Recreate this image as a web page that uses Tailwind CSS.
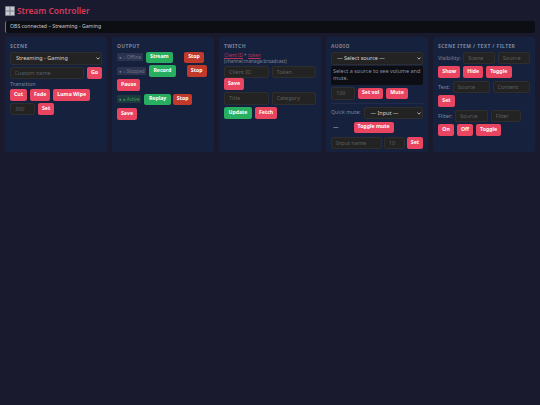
<!DOCTYPE html>
<html>
  <head>
    <meta charset="UTF-8" />
    <title>Stream Controller</title>
    <script src="https://cdn.jsdelivr.net/npm/@tailwindcss/browser@4"></script>
  </head>
  <body class="bg-[#1a1a2e] h-[405px] w-[540px] overflow-hidden font-['Noto_Sans',sans-serif] text-[7px] text-[#e0e0e0]">
    <header class="flex items-center gap-[2px] h-[21px] pl-[5px] pt-[1px]">
      <svg width="10" height="10" viewBox="0 0 10 10" class="shrink-0">
        <rect width="10" height="10" rx="1" fill="#7c7e8c" />
        <rect x="1" y="1" width="3.5" height="3.5" fill="#c9cad0" />
        <rect x="5.5" y="1" width="3.5" height="3.5" fill="#c9cad0" />
        <rect x="1" y="5.5" width="3.5" height="3.5" fill="#c9cad0" />
        <rect x="5.5" y="5.5" width="3.5" height="3.5" fill="#c9cad0" />
      </svg>
      <h1 class="text-[8.4px] font-semibold text-[#d63a5a] leading-none">Stream Controller</h1>
    </header>

    <div class="mx-[5px] h-[12px] flex items-center pl-[4px] bg-[#0d0d14] border-l border-l-[#2f9e6a] rounded-[2px] text-[5.2px] text-[#c9cbd1]">
      OBS connected – Streaming - Gaming
    </div>

    <main class="grid grid-cols-5 gap-[5px] mx-[5px] mt-[4px]">
      <!-- Scene -->
      <section class="h-[115px] bg-[#16213e] rounded-[3px] p-[5px]">
        <h2 class="text-[5px] font-bold tracking-[0.4px] text-[#7d8699] leading-[7px] mb-[2px] mt-[0.5px]">SCENE</h2>
        <div class="relative">
          <select class="appearance-none block w-full h-[13px] bg-[#232323] rounded-[2px] text-[5.5px] pl-[5px] text-[#d5d5d5] border border-[#2e2e2e]">
            <option>Streaming - Gaming</option>
          </select>
          <svg width="4" height="3" viewBox="0 0 4 3" class="absolute right-[2px] top-[5px]"><path d="M.5.5 2 2.2 3.5.5" fill="none" stroke="#d5d5d5" stroke-width=".8" /></svg>
        </div>
        <div class="flex items-center gap-[3px] mt-[2px]">
          <input placeholder="Custom name" class="min-w-0 flex-1 h-[12.5px] bg-[#232323] border border-[#2e2e2e] rounded-[2px] px-[3.5px] text-[5.5px] placeholder-[#5f5f5f]" />
          <button class="h-[11.5px] px-[4px] bg-[#e94560] rounded-[2px] text-[5.2px] font-bold text-white">Go</button>
        </div>
        <p class="text-[5.5px] text-[#7d8699] leading-[7px] mt-[2px]">Transition</p>
        <div class="flex gap-[3px] mt-[1px]">
          <button class="h-[11.5px] px-[4px] bg-[#e94560] rounded-[2px] text-[5.2px] font-bold text-white">Cut</button>
          <button class="h-[11.5px] px-[4px] bg-[#e94560] rounded-[2px] text-[5.2px] font-bold text-white">Fade</button>
          <button class="h-[11.5px] px-[4px] bg-[#e94560] rounded-[2px] text-[5.2px] font-bold text-white">Luma Wipe</button>
        </div>
        <div class="flex gap-[3px] mt-[2px] items-center">
          <input placeholder="300" class="w-[25px] h-[12.5px] bg-[#232323] border border-[#2e2e2e] rounded-[2px] px-[4px] text-[5.5px] placeholder-[#5f5f5f]" />
          <button class="h-[11.5px] px-[4px] bg-[#e94560] rounded-[2px] text-[5.2px] font-bold text-white">Set</button>
        </div>
      </section>

      <!-- Output -->
      <section class="h-[115px] bg-[#16213e] rounded-[3px] p-[5px]">
        <h2 class="text-[5px] font-bold tracking-[0.4px] text-[#7d8699] leading-[7px] mb-[2px] mt-[0.5px]">OUTPUT</h2>
        <div class="flex items-center gap-[2.5px] h-[11.5px]">
          <span class="h-[8px] px-[2px] bg-[#2b3350] rounded-[1px] text-[4.5px] leading-[8px] text-[#6f7688] whitespace-nowrap">● ○ Offline</span>
          <button class="h-[11.5px] px-[4.5px] bg-[#27ae60] rounded-[2px] text-[5.2px] font-bold text-white">Stream</button>
          <button class="h-[11.5px] px-[4px] bg-[#c0392b] rounded-[2px] text-[5.2px] font-bold text-white ml-[8.5px]">Stop</button>
        </div>
        <div class="flex items-center gap-[2.5px] h-[11.5px] mt-[2px]">
          <span class="h-[8px] px-[2px] bg-[#2b3350] rounded-[1px] text-[4.5px] leading-[8px] text-[#6f7688] whitespace-nowrap">● ○ Stopped</span>
          <button class="h-[11.5px] px-[4.5px] bg-[#27ae60] rounded-[2px] text-[5.2px] font-bold text-white">Record</button>
          <button class="h-[11.5px] px-[4px] bg-[#c0392b] rounded-[2px] text-[5.2px] font-bold text-white ml-[8.5px]">Stop</button>
        </div>
        <button class="block h-[12px] px-[4px] mt-[2.5px] bg-[#e94560] rounded-[2px] text-[5.2px] font-bold text-white">Pause</button>
        <div class="flex items-center gap-[2px] h-[11.5px] mt-[2.5px]">
          <span class="h-[8px] px-[2px] bg-[#1c3a3c] rounded-[1px] text-[4.5px] leading-[8px] text-[#3f9a68] whitespace-nowrap">● ● Active</span>
          <button class="h-[11.5px] px-[4.5px] bg-[#27ae60] rounded-[2px] text-[5.2px] font-bold text-white ml-[1px]">Replay</button>
          <button class="h-[11.5px] px-[4px] bg-[#c0392b] rounded-[2px] text-[5.2px] font-bold text-white">Stop</button>
        </div>
        <button class="block h-[12px] px-[4px] mt-[2.5px] bg-[#e94560] rounded-[2px] text-[5.2px] font-bold text-white">Save</button>
      </section>

      <!-- Twitch -->
      <section class="h-[115px] bg-[#16213e] rounded-[3px] p-[5px]">
        <h2 class="text-[5px] font-bold tracking-[0.4px] text-[#7d8699] leading-[7px] mb-[2px] mt-[0.5px]">TWITCH</h2>
        <p class="text-[4.7px] leading-[6px] text-[#7d8699]"><a class="underline text-[#b8355a]">Client ID</a> + <a class="underline text-[#b8355a]">token</a><br />(channel:manage:broadcast)</p>
        <div class="flex gap-[3px] mt-[2px]">
          <input placeholder="Client ID" class="min-w-0 flex-1 h-[12.5px] bg-[#232323] border border-[#2e2e2e] rounded-[2px] px-[4px] text-[5.5px] placeholder-[#5f5f5f]" />
          <input placeholder="Token" class="min-w-0 flex-1 h-[12.5px] bg-[#232323] border border-[#2e2e2e] rounded-[2px] px-[4px] text-[5.5px] placeholder-[#5f5f5f]" />
        </div>
        <button class="block h-[12px] px-[4px] bg-[#e94560] rounded-[2px] text-[5.2px] font-bold text-white">Save</button>
        <div class="flex gap-[3px] mt-[2px]">
          <input placeholder="Title" class="min-w-0 flex-1 h-[12.5px] bg-[#232323] border border-[#2e2e2e] rounded-[2px] px-[4px] text-[5.5px] placeholder-[#5f5f5f]" />
          <input placeholder="Category" class="min-w-0 flex-1 h-[12.5px] bg-[#232323] border border-[#2e2e2e] rounded-[2px] px-[4px] text-[5.5px] placeholder-[#5f5f5f]" />
        </div>
        <div class="flex gap-[3px] mt-[2.5px]">
          <button class="h-[11.5px] px-[4.5px] bg-[#27ae60] rounded-[2px] text-[5.2px] font-bold text-white">Update</button>
          <button class="h-[11.5px] px-[4px] bg-[#e94560] rounded-[2px] text-[5.2px] font-bold text-white">Fetch</button>
        </div>
      </section>

      <!-- Audio -->
      <section class="h-[115px] bg-[#16213e] rounded-[3px] p-[5px]">
        <h2 class="text-[5px] font-bold tracking-[0.4px] text-[#7d8699] leading-[7px] mb-[2px] mt-[0.5px]">AUDIO</h2>
        <div class="relative">
          <select class="appearance-none block w-full h-[13px] bg-[#232323] rounded-[2px] text-[5.5px] pl-[5px] text-[#d5d5d5] border border-[#2e2e2e]">
            <option>— Select source —</option>
          </select>
          <svg width="4" height="3" viewBox="0 0 4 3" class="absolute right-[2px] top-[5px]"><path d="M.5.5 2 2.2 3.5.5" fill="none" stroke="#d5d5d5" stroke-width=".8" /></svg>
        </div>
        <p class="h-[19px] bg-[#0d0d14] rounded-[2px] px-[2px] pt-[2px] mt-[1.5px] text-[5.5px] leading-[7px] text-[#8a8f9c]">Select a source to see volume and mute.</p>
        <div class="flex gap-[3px] items-center mt-[2px]">
          <input placeholder="100" class="w-[24px] h-[12.5px] bg-[#232323] border border-[#2e2e2e] rounded-[2px] px-[4px] text-[5.5px] placeholder-[#5f5f5f]" />
          <button class="h-[11.5px] px-[4px] bg-[#e94560] rounded-[2px] text-[5.2px] font-bold text-white">Set vol</button>
          <button class="h-[11.5px] px-[4px] bg-[#e94560] rounded-[2px] text-[5.2px] font-bold text-white">Mute</button>
        </div>
        <div class="border-t border-[#222c4a] mt-[3px] pt-[3px] flex items-center gap-[4px]">
          <span class="text-[5.2px] text-[#7d8699] whitespace-nowrap">Quick mute:</span>
          <div class="relative min-w-0 flex-1">
            <select class="appearance-none block w-full h-[12.5px] bg-[#232323] rounded-[2px] text-[5.5px] pl-[5px] text-[#d5d5d5] border border-[#2e2e2e]">
              <option>— Input —</option>
            </select>
            <svg width="4" height="3" viewBox="0 0 4 3" class="absolute right-[2px] top-[5px]"><path d="M.5.5 2 2.2 3.5.5" fill="none" stroke="#d5d5d5" stroke-width=".8" /></svg>
          </div>
        </div>
        <div class="flex items-center mt-[2.5px]">
          <span class="w-[22.5px] text-[5.5px] text-[#c9cbd1] pl-[2px]">—</span>
          <button class="h-[11.5px] px-[4px] bg-[#e94560] rounded-[2px] text-[5.2px] font-bold text-white">Toggle mute</button>
        </div>
        <div class="flex gap-[2px] items-center mt-[3.5px]">
          <input placeholder="Input name" class="min-w-0 flex-1 h-[12.5px] bg-[#232323] border border-[#2e2e2e] rounded-[2px] px-[4px] text-[5.5px] placeholder-[#5f5f5f]" />
          <input placeholder="10" class="w-[21px] h-[12.5px] bg-[#232323] border border-[#2e2e2e] rounded-[2px] px-[4px] text-[5.5px] placeholder-[#5f5f5f]" />
          <button class="h-[11.5px] px-[4px] bg-[#e94560] rounded-[2px] text-[5.2px] font-bold text-white">Set</button>
        </div>
      </section>

      <!-- Scene item / text / filter -->
      <section class="h-[115px] bg-[#16213e] rounded-[3px] p-[5px]">
        <h2 class="text-[5px] font-bold tracking-[0.4px] text-[#7d8699] leading-[7px] mb-[2px] mt-[0.5px] whitespace-nowrap">SCENE ITEM / TEXT / FILTER</h2>
        <div class="flex items-center gap-[2.5px]">
          <span class="text-[5.5px] text-[#7d8699]">Visibility:</span>
          <input placeholder="Scene" class="min-w-0 flex-1 h-[12.5px] bg-[#232323] border border-[#2e2e2e] rounded-[2px] px-[4px] text-[5.5px] placeholder-[#5f5f5f]" />
          <input placeholder="Source" class="min-w-0 flex-1 h-[12.5px] bg-[#232323] border border-[#2e2e2e] rounded-[2px] px-[4px] text-[5.5px] placeholder-[#5f5f5f]" />
        </div>
        <div class="flex gap-[2.5px] mt-[2px]">
          <button class="h-[11.5px] px-[4.3px] bg-[#e94560] rounded-[2px] text-[5.2px] font-bold text-white">Show</button>
          <button class="h-[11.5px] px-[4.3px] bg-[#e94560] rounded-[2px] text-[5.2px] font-bold text-white">Hide</button>
          <button class="h-[11.5px] px-[4.3px] bg-[#e94560] rounded-[2px] text-[5.2px] font-bold text-white">Toggle</button>
        </div>
        <div class="flex items-center gap-[2.5px] mt-[3px]">
          <span class="text-[5.5px] text-[#7d8699]">Text:</span>
          <input placeholder="Source" class="min-w-0 flex-1 h-[12.5px] bg-[#232323] border border-[#2e2e2e] rounded-[2px] px-[4px] text-[5.5px] placeholder-[#5f5f5f]" />
          <input placeholder="Content" class="min-w-0 flex-1 h-[12.5px] bg-[#232323] border border-[#2e2e2e] rounded-[2px] px-[4px] text-[5.5px] placeholder-[#5f5f5f]" />
        </div>
        <button class="block h-[11.5px] px-[4.3px] mt-[2px] bg-[#e94560] rounded-[2px] text-[5.2px] font-bold text-white">Set</button>
        <div class="flex items-center gap-[2.5px] mt-[3px]">
          <span class="text-[5.5px] text-[#7d8699]">Filter:</span>
          <input placeholder="Source" class="min-w-0 w-[33px] h-[12.5px] bg-[#232323] border border-[#2e2e2e] rounded-[2px] px-[4px] text-[5.5px] placeholder-[#5f5f5f]" />
          <input placeholder="Filter" class="min-w-0 w-[30px] h-[12.5px] bg-[#232323] border border-[#2e2e2e] rounded-[2px] px-[4px] text-[5.5px] placeholder-[#5f5f5f]" />
        </div>
        <div class="flex gap-[2.5px] mt-[2px]">
          <button class="h-[11.5px] px-[4.3px] bg-[#e94560] rounded-[2px] text-[5.2px] font-bold text-white">On</button>
          <button class="h-[11.5px] px-[4.3px] bg-[#e94560] rounded-[2px] text-[5.2px] font-bold text-white">Off</button>
          <button class="h-[11.5px] px-[4.3px] bg-[#e94560] rounded-[2px] text-[5.2px] font-bold text-white">Toggle</button>
        </div>
      </section>
    </main>
  </body>
</html>
